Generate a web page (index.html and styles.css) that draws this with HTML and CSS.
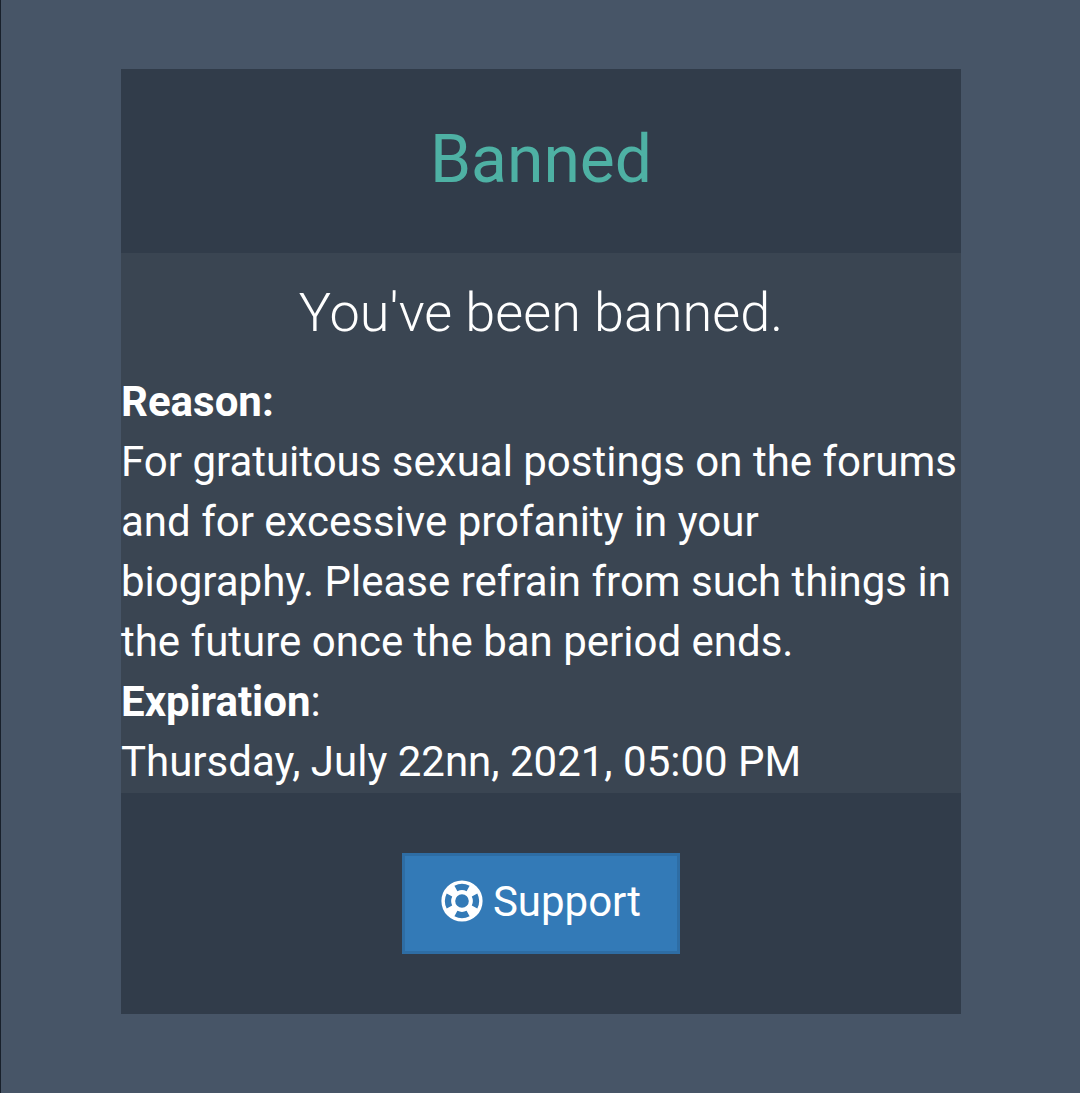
FILE: index.html
```html
<!DOCTYPE html>
<html lang="en">
<head>
  <meta charset="UTF-8" />
  <meta name="viewport" content="width=device-width, initial-scale=1.0">
  <title>Banned</title>
  <link rel="stylesheet" href="styles.css">
</head>
<body>

  <div class="panel">
    <div class="panel-header">
      <h1>Banned</h1>
    </div>

    <div class="panel-body">
      <p class="lead">You've been banned.</p>
      <div class="details">
        <strong>Reason:</strong><br>
        For gratuitous sexual postings on the forums and for excessive profanity in your biography. Please refrain from such things in the future once the ban period ends.<br>
        <strong>Expiration</strong>:<br>
        Thursday, July 22nn, 2021, 05:00 PM
      </div>
    </div>

    <div class="panel-footer">
      <a class="btn" href="#">
        <svg class="icon" viewBox="-21 -21 42 42" aria-hidden="true">
          <path fill-rule="evenodd" d="M0-20.6A20.6 20.6 0 1 1 0 20.6A20.6 20.6 0 1 1 0-20.6z
            M0-6.8A6.8 6.8 0 1 0 0 6.8A6.8 6.8 0 1 0 0-6.8z
            M-7.6-15.3A17.1 17.1 0 0 1 7.6-15.3L4.6-9.8A10.8 10.8 0 0 0-4.6-9.8z
            M15.3-7.6A17.1 17.1 0 0 1 15.3 7.6L9.8 4.6A10.8 10.8 0 0 0 9.8-4.6z
            M7.6 15.3A17.1 17.1 0 0 1-7.6 15.3L-4.6 9.8A10.8 10.8 0 0 0 4.6 9.8z
            M-15.3 7.6A17.1 17.1 0 0 1-15.3-7.6L-9.8-4.6A10.8 10.8 0 0 0-9.8 4.6z"/>
        </svg>
        <span>Support</span>
      </a>
    </div>
  </div>

</body>
</html>
```
FILE: styles.css
```css
* {
  box-sizing: border-box;
}

body {
  margin: 0;
  min-height: 100vh;
  padding: 69.4px 119px 0 120px;
  border-left: 1px solid #18202b;
  background: #475567;
  color: #fff;
  font-family: Roboto, "Liberation Sans", sans-serif;
  font-size: 42px;
  line-height: 60px;
}

.panel {
  background: #3a4552;
}

.panel-header {
  height: 184px;
  padding-top: 55px;
  background: #313c4a;
  text-align: center;
}

h1 {
  margin: 0;
  color: #4eb1a4;
  font-size: 66px;
  font-weight: 400;
  line-height: 72px;
}

.panel-body {
  height: 539.2px;
  padding-top: 21.2px;
}

.lead {
  margin: 0 0 21px;
  font-size: 54px;
  font-weight: 300;
  line-height: 76px;
  text-align: center;
}

.panel-footer {
  padding: 60px 0 59.6px;
  background: #313c4a;
  display: flex;
  justify-content: center;
}

.btn {
  display: flex;
  align-items: center;
  gap: 10px;
  height: 101.8px;
  padding: 0 36px 3px;
  border: 3px solid #2e6da4;
  background: #337ab7;
  color: #fff;
  text-decoration: none;
}

.btn span {
  padding-top: 1px;
}

.icon {
  width: 42px;
  height: 42px;
  margin-top: -1px;
  fill: #fff;
}
```
